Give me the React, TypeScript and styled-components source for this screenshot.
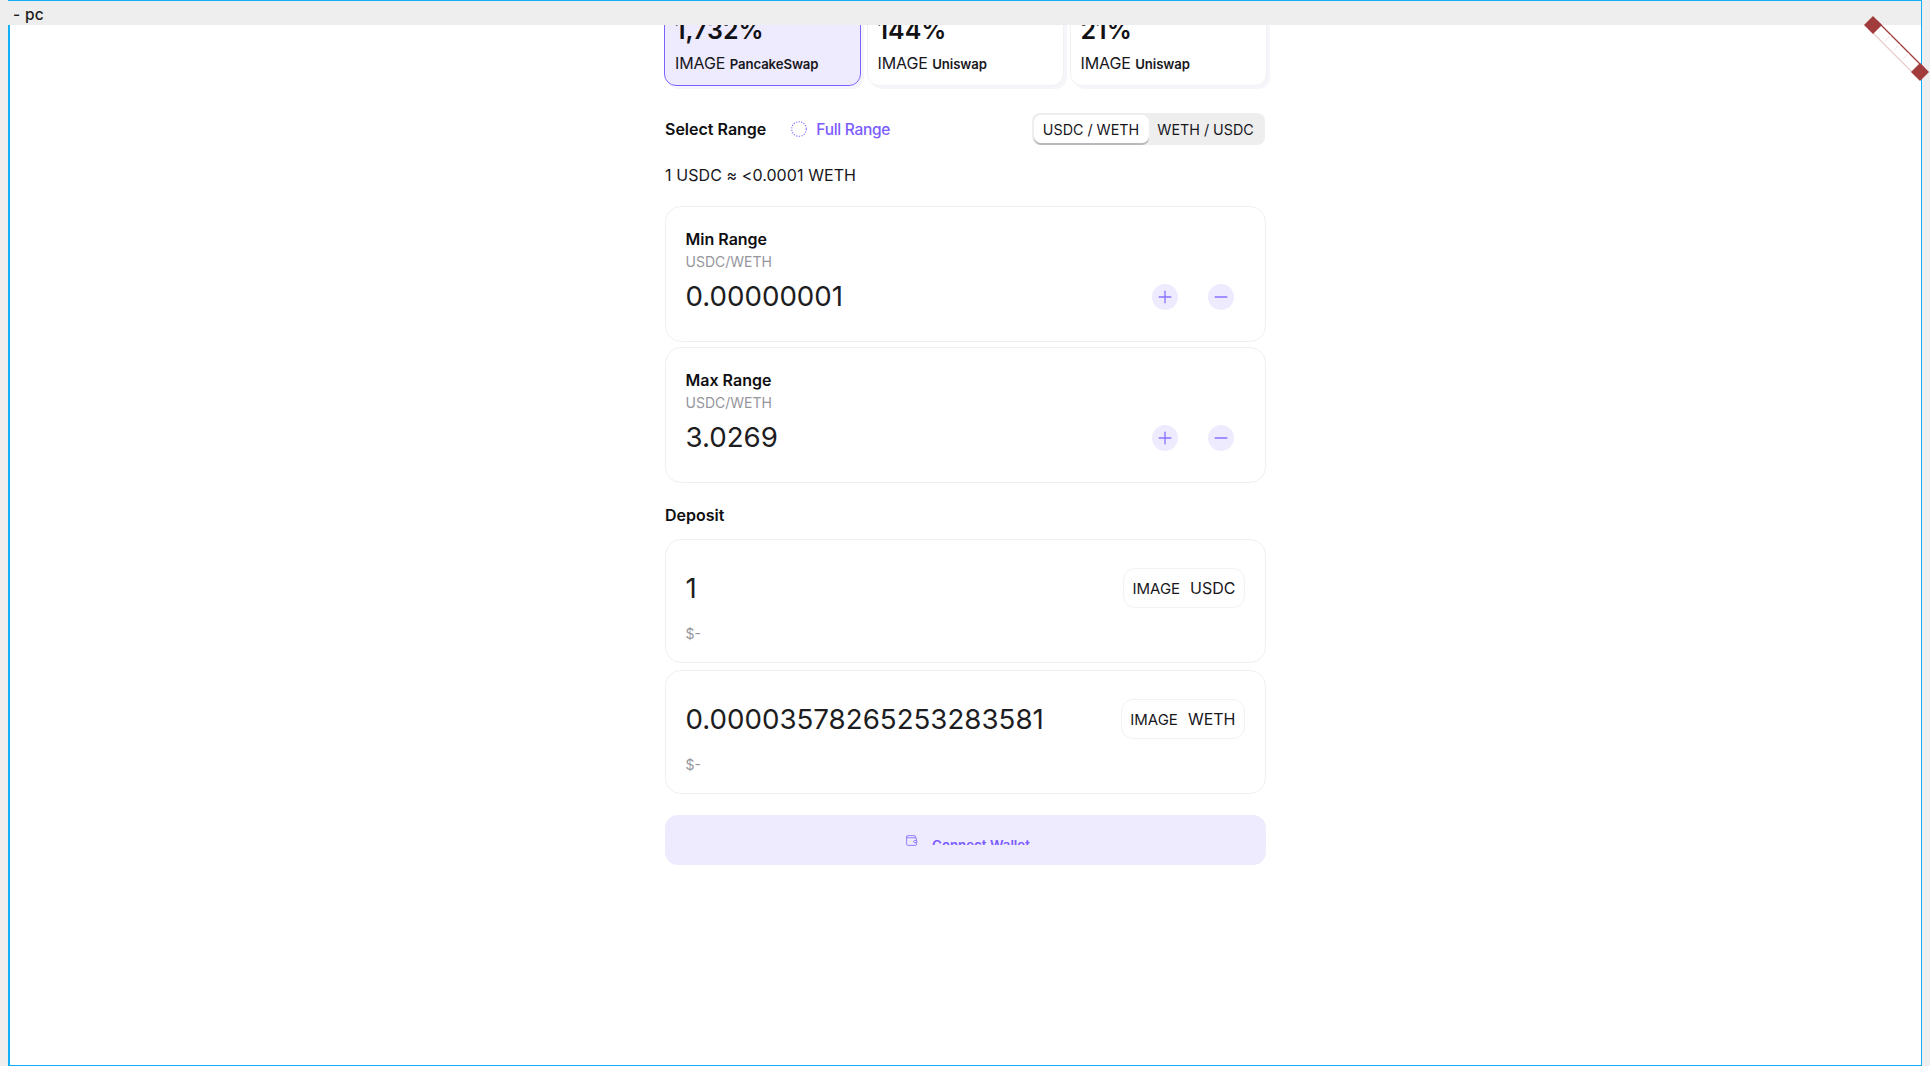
import React from 'react';
import styled, { createGlobalStyle } from 'styled-components';
import { Plus, Minus, Wallet } from 'lucide-react';

const GlobalStyle = createGlobalStyle`
  html, body {
    margin: 0;
    padding: 0;
    height: 1066px;
    overflow: hidden;
    background: #eeeeee;
    font-family: Inter, "Liberation Sans", sans-serif;
    color: #17171c;
  }
`;

const pools = [
  { apr: '1,732%', dex: 'PancakeSwap', active: true },
  { apr: '144%', dex: 'Uniswap', active: false },
  { apr: '21%', dex: 'Uniswap', active: false },
];

const ranges = [
  { label: 'Min Range', value: '0.00000001' },
  { label: 'Max Range', value: '3.0269' },
];

const deposits = [
  { value: '1', token: 'USDC' },
  { value: '0.00003578265253283581', token: 'WETH' },
];

const App: React.FC = () => {
  return (
    <>
      <GlobalStyle />
      <Frame>
        <TopBar>- pc</TopBar>
        <Viewport>
          <Column>
            <PoolRow>
              {pools.map((p) => (
                <PoolCard key={p.apr} $active={p.active}>
                  <PoolApr>{p.apr}</PoolApr>
                  <PoolMeta>
                    IMAGE <PoolDex>{p.dex}</PoolDex>
                  </PoolMeta>
                </PoolCard>
              ))}
            </PoolRow>

            <RangeHeader>
              <SectionTitle>Select Range</SectionTitle>
              <FullRange>
                <svg width="16" height="16" viewBox="0 0 16 16">
                  <circle cx="8" cy="8" r="7.3" fill="none" stroke="#7b5cff" strokeWidth="1.1" strokeDasharray="1.1 1.5" />
                </svg>
                Full Range
              </FullRange>
              <Toggle>
                <ToggleItem $active>USDC / WETH</ToggleItem>
                <ToggleItem>WETH / USDC</ToggleItem>
              </Toggle>
            </RangeHeader>

            <Rate>1 USDC ≈ &lt;0.0001 WETH</Rate>

            <RangeList>
              {ranges.map((r) => (
                <RangeCard key={r.label}>
                  <RangeLabel>{r.label}</RangeLabel>
                  <RangePair>USDC/WETH</RangePair>
                  <RangeValueRow>
                    <RangeValue>{r.value}</RangeValue>
                    <StepGroup>
                      <StepButton>
                        <Plus size={20} strokeWidth={1.6} />
                      </StepButton>
                      <StepButton>
                        <Minus size={20} strokeWidth={1.6} />
                      </StepButton>
                    </StepGroup>
                  </RangeValueRow>
                </RangeCard>
              ))}
            </RangeList>

            <DepositTitle>Deposit</DepositTitle>
            <DepositList>
              {deposits.map((d) => (
                <DepositCard key={d.token}>
                  <DepositRow>
                    <BigValue>{d.value}</BigValue>
                    <TokenPill>
                      <TokenImage>IMAGE</TokenImage>
                      {d.token}
                    </TokenPill>
                  </DepositRow>
                  <UsdValue>$-</UsdValue>
                </DepositCard>
              ))}
            </DepositList>

            <ConnectButton>
              <Wallet size={13} strokeWidth={1.4} />
              <ConnectClip>
                <ConnectLabel>Connect Wallet</ConnectLabel>
              </ConnectClip>
            </ConnectButton>
          </Column>
        </Viewport>
        <Ruler width="66" height="66" viewBox="0 0 66 66">
          <polygon points="13,6 60,53 52,61 5,14" fill="#ffffff" />
          <line x1="13" y1="6" x2="60" y2="53" stroke="#a23c3c" strokeWidth="1.3" />
          <line x1="5" y1="14" x2="52" y2="61" stroke="#e6cccc" strokeWidth="1.2" />
          <line x1="27" y1="20" x2="21" y2="26" stroke="#f3e4e4" strokeWidth="1" />
          <line x1="36" y1="29" x2="30" y2="35" stroke="#f3e4e4" strokeWidth="1" />
          <line x1="45" y1="38" x2="39" y2="44" stroke="#f3e4e4" strokeWidth="1" />
          <polygon points="9,1 18,10 9,19 0,10" fill="#a23c3c" />
          <polygon points="56,48 65,57 56,66 47,57" fill="#a23c3c" />
        </Ruler>
      </Frame>
    </>
  );
};

const Frame = styled.div`
  position: relative;
  box-sizing: border-box;
  width: 1914px;
  height: 1066px;
  margin-left: 8px;
  display: flex;
  flex-direction: column;
  background: #ffffff;
  border: 1px solid #0fb0f5;
  border-width: 1px 1px 1px 2px;
`;

const TopBar = styled.div`
  position: relative;
  z-index: 2;
  flex: none;
  height: 24px;
  margin-left: -10px;
  padding-left: 13px;
  background: #eeeeee;
  font-size: 15.5px;
  font-weight: 500;
  line-height: 28px;
  letter-spacing: 0.3px;
  color: #1d1d20;
`;

const Viewport = styled.div`
  flex: 1;
  overflow: hidden;
`;

const Column = styled.div`
  width: 601px;
  margin: -39px 0 0 654.5px;
  display: flex;
  flex-direction: column;
`;

const PoolRow = styled.div`
  display: grid;
  grid-template-columns: 197px 197px 197px;
  gap: 6px;
  height: 100px;
  margin-left: -1px;
`;

const PoolCard = styled.div<{ $active?: boolean }>`
  box-sizing: border-box;
  padding: 28px 0 0 ${(p) => (p.$active ? '10.5px' : '10px')};
  border-radius: 12px;
  background: ${(p) => (p.$active ? '#eeebff' : '#ffffff')};
  border: 1px solid ${(p) => (p.$active ? '#7b61ff' : '#f2f2f4')};
  box-shadow: 3px 3px 0 #f6f6fa;
`;

const PoolApr = styled.div`
  font-size: 25px;
  line-height: 30px;
  font-weight: 600;
  color: #121216;
`;

const PoolMeta = styled.div`
  margin-top: 7px;
  font-size: 16px;
  line-height: 22px;
  white-space: nowrap;
  letter-spacing: -0.1px;
`;

const PoolDex = styled.span`
  font-size: 13.2px;
  font-weight: 600;
`;

const RangeHeader = styled.div`
  margin-top: 27px;
  height: 32px;
  display: flex;
  align-items: center;
`;

const SectionTitle = styled.div`
  margin-left: 0.5px;
  font-size: 16px;
  line-height: 24px;
  font-weight: 600;
  color: #0f0f12;
`;

const FullRange = styled.div`
  margin-left: 25px;
  display: flex;
  align-items: center;
  gap: 9px;
  font-size: 15.5px;
  letter-spacing: -0.3px;
  font-weight: 500;
  color: #7b5cff;
`;

const Toggle = styled.div`
  margin: 0 1px 0 auto;
  box-sizing: border-box;
  width: 233px;
  height: 32px;
  padding: 2px;
  display: flex;
  background: #eeeeee;
  border-radius: 8px;
`;

const ToggleItem = styled.div<{ $active?: boolean }>`
  box-sizing: border-box;
  width: ${(p) => (p.$active ? '115px' : '114px')};
  display: flex;
  align-items: center;
  justify-content: center;
  font-size: 14.3px;
  white-space: nowrap;
  border-radius: 7px;
  background: ${(p) => (p.$active ? '#ffffff' : 'transparent')};
  box-shadow: ${(p) => (p.$active ? '0 2px 0 #b9b9bd' : 'none')};
`;

const Rate = styled.div`
  margin: 18px 0 0 0.5px;
  font-size: 16px;
  line-height: 24px;
  letter-spacing: 0.08px;
`;

const RangeList = styled.div`
  margin-top: 19px;
  display: flex;
  flex-direction: column;
  gap: 5px;
`;

const RangeCard = styled.div`
  box-sizing: border-box;
  height: 136px;
  padding: 22px 20px 0;
  border: 1px solid #f0f0f2;
  border-radius: 16px;
`;

const RangeLabel = styled.div`
  font-size: 16px;
  line-height: 20px;
  font-weight: 600;
  color: #0f0f12;
`;

const RangePair = styled.div`
  margin-top: 4px;
  font-size: 14px;
  line-height: 18px;
  color: #96969c;
`;

const RangeValueRow = styled.div`
  margin-top: 8px;
  display: flex;
  align-items: center;
  justify-content: space-between;
`;

const BigValue = styled.div`
  font-size: 27.7px;
  line-height: 36px;
  color: #1d1d22;
`;

const RangeValue = styled(BigValue)`
  line-height: 34px;
  padding-bottom: 2px;
`;

const StepGroup = styled.div`
  display: flex;
  gap: 30px;
  margin-right: 11px;
`;

const StepButton = styled.div`
  width: 26px;
  height: 26px;
  border-radius: 50%;
  display: flex;
  align-items: center;
  justify-content: center;
  background: #eeebff;
  color: #8b72ff;
`;

const DepositTitle = styled(SectionTitle)`
  margin-top: 20px;
`;

const DepositList = styled.div`
  margin-top: 12px;
  display: flex;
  flex-direction: column;
  gap: 7px;
`;

const DepositCard = styled.div`
  box-sizing: border-box;
  height: 124px;
  padding: 28px 20px 0;
  border: 1px solid #f0f0f2;
  border-radius: 16px;
`;

const DepositRow = styled.div`
  display: flex;
  align-items: center;
  justify-content: space-between;
`;

const TokenPill = styled.div`
  box-sizing: border-box;
  height: 40px;
  padding: 0 8px;
  display: flex;
  align-items: center;
  font-size: 16px;
  border: 1px solid #f2f2f4;
  border-radius: 12px;
`;

const TokenImage = styled.span`
  margin-right: 10px;
  font-size: 15px;
`;

const UsdValue = styled.div`
  margin-top: 17px;
  font-size: 14px;
  line-height: 18px;
  color: #96969c;
`;

const ConnectButton = styled.div`
  margin-top: 21px;
  height: 50px;
  box-sizing: border-box;
  padding: 19px 0 0 5px;
  display: flex;
  justify-content: center;
  gap: 14px;
  background: #eeebff;
  border-radius: 13px;
  color: #7b5cff;
`;

const ConnectClip = styled.div`
  height: 11px;
  overflow: hidden;
`;

const ConnectLabel = styled.div`
  margin-top: 1px;
  font-size: 13.3px;
  line-height: 20px;
  font-weight: 600;
`;

const Ruler = styled.svg`
  position: absolute;
  z-index: 3;
  top: 14px;
  left: 1854px;
  overflow: visible;
`;

export default App;
